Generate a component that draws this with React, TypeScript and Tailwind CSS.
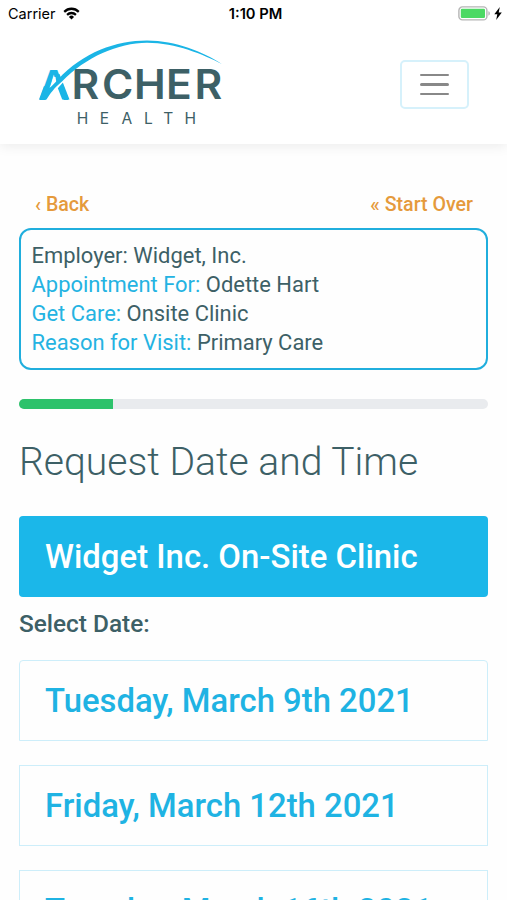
import React from "react";

const summary = [
  { label: "Employer:", value: "Widget, Inc.", plain: true },
  { label: "Appointment For:", value: "Odette Hart" },
  { label: "Get Care:", value: "Onsite Clinic" },
  { label: "Reason for Visit:", value: "Primary Care" },
];

const dates = ["Tuesday, March 9th 2021", "Friday, March 12th 2021", "Tuesday, March 16th 2021"];

function StatusBar() {
  return (
    <div className="grid h-7 grid-cols-3 items-center pl-2 pr-[5px] text-black">
      <div className="flex items-center gap-[7px] font-['Inter',sans-serif] text-[14.5px]">
        <span>Carrier</span>
        <svg width="17" height="13" viewBox="0 0 18 13" preserveAspectRatio="none" className="-translate-y-px" fill="none" stroke="currentColor" strokeWidth="2.3">
          <path d="M1.3 4.9a11 11 0 0 1 15.4 0" />
          <path d="M4.3 7.9a6.8 6.8 0 0 1 9.4 0" />
          <path d="M9 12.6L6.3 9.9a3.9 3.9 0 0 1 5.4 0z" fill="currentColor" stroke="none" />
        </svg>
      </div>
      <span className="pl-px text-center font-['Inter',sans-serif] text-[14.7px] font-semibold">1:10 PM</span>
      <div className="flex items-center justify-end gap-[3px]">
        <svg width="33" height="15" viewBox="0 0 33 15" className="-translate-y-px">
          <rect x="0.9" y="0.9" width="28" height="13" rx="3.5" fill="none" stroke="#b5b5b5" strokeWidth="1.4" />
          <rect x="2.8" y="2.8" width="24.2" height="9.2" rx="1.2" fill="#4cd964" />
          <path d="M30.4 5.3c2 .6 2 3.8 0 4.4z" fill="#b5b5b5" />
        </svg>
        <svg width="8" height="13" viewBox="0 0 8 13" className="-translate-y-px">
          <path d="M5.8 0L0.3 7.3h3L2.2 13L7.8 5.4H4.7z" fill="#000" />
        </svg>
      </div>
    </div>
  );
}

function Logo() {
  return (
    <svg width="190" height="90" viewBox="36 38 190 90" className="font-['Inter',sans-serif]">
      <text x="38.3" y="99.5" fontSize="40.5" fontWeight="600" textLength="31" lengthAdjust="spacingAndGlyphs" fill="#1bb5e6">A</text>
      {/* opens the counter of the A so the bow can pass through it */}
      <path d="M46 101L53.5 77L56.5 77L64 101z" fill="#fff" />
      <path d="M55 74L59.5 74L69.500 99.5L62.2 99.5L57 86z" fill="#1bb5e6" />
      <text x="68 97.200 127.600 158.100 185.300" y="99.5" transform="scale(1.05 1)" fontSize="40.5" fontWeight="600" fill="#3d6066">RCHER</text>
      <path d="M47.500 101C53 91 60 83 68 76" fill="none" stroke="#fff" strokeWidth="2.5" />
      <path d="M39 99.5L44 86L49 88C51 87 54 84 58 79.500C83 52.500 116 40.600 147 40.6C176 40.6 203 52 222 64C203 54.500 176 42.8 147 42.8C118 43 86 57 62 81.500C54 88 50 94 46.500 99.5z" fill="#1bb5e6" />
      <text x="76.8 99.700 121.4 144 163.2 184.500" y="124" fontSize="15.500" fill="#3d6066">HEALTH</text>
    </svg>
  );
}

export default function App() {
  return (
    <div className="h-[900px] overflow-hidden bg-[#fefefe] font-['Roboto',sans-serif] text-[#3d6066]">
      <header className="h-36 bg-white shadow-[0_2px_12px_rgba(0,0,0,0.08)]">
        <StatusBar />
        <div className="flex items-start justify-between pl-9 pr-[38px] pt-[10px]">
          <Logo />
          <button className="mt-[22px] flex h-[49px] w-[69px] flex-col items-center justify-center gap-[7.3px] rounded-[5px] border-2 border-[#d6f1fb]">
            <span className="h-[2.4px] w-[29px] rounded-full bg-[#888]" />
            <span className="h-[2.4px] w-[29px] rounded-full bg-[#888]" />
            <span className="h-[2.4px] w-[29px] rounded-full bg-[#888]" />
          </button>
        </div>
      </header>

      <main className="px-[19px] pt-[46px]">
        <nav className="flex h-[38px] items-start justify-between pl-4 pr-[15px] text-[19.6px] font-medium leading-[29px] text-[#e59a3c]">
          <a>‹ Back</a>
          <a>« Start Over</a>
        </nav>

        <section className="h-[142px] rounded-[12px] border-2 border-[#20aedd] px-[10.5px] pt-[10.6px] text-[21.95px] leading-[29.3px]">
          {summary.map((row) => (
            <p key={row.label}>
              <span className={row.plain ? "" : "text-[#24b3e2]"}>{row.label}</span> {row.value}
            </p>
          ))}
        </section>

        <div className="mt-[29px] h-[10px] overflow-hidden rounded-full bg-[#e9ebee]">
          <div className="h-full w-1/5 bg-[#2dc26b]" />
        </div>

        <h1 className="mt-[29px] text-[39.1px] font-light leading-[48px]">Request Date and Time</h1>

        <div className="mt-[30px] flex h-[81px] items-center rounded-[4px] bg-[#1bb7e9] px-[26px] text-[32.9px] font-medium text-white">
          Widget Inc. On-Site Clinic
        </div>
        <h2 className="mt-[12px] text-[24.4px] font-medium leading-[30px]">Select Date:</h2>

        <div className="mt-[21px] flex flex-col gap-6">
          {dates.map((date) => (
            <button
              key={date}
              className="flex h-[81px] shrink-0 items-center border-[1.5px] border-[#cdeefa] px-[25px] pt-[2px] text-[32.85px] font-medium text-[#1fb3e3] first:rounded-t-[4px]"
            >
              {date}
            </button>
          ))}
        </div>
      </main>
    </div>
  );
}
